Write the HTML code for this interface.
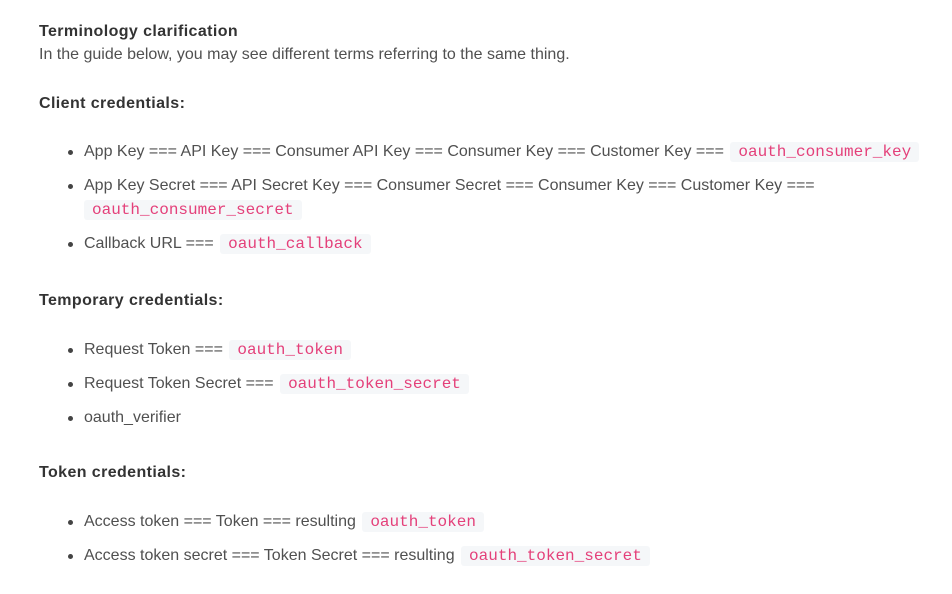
<!DOCTYPE html>
<html><head><meta charset="utf-8"><style>
html,body{margin:0;padding:0;background:#fff;width:952px;height:594px;overflow:hidden}
body{font-family:"Liberation Sans",Arial,sans-serif;font-size:16px;color:#505050;position:relative}
.l{position:absolute;left:39px;line-height:20px;white-space:nowrap}
.h{font-weight:bold;color:#333;letter-spacing:0.4px}
.b{left:84px}
.b.d::before{content:"";position:absolute;left:-16px;top:8px;width:5px;height:5px;border-radius:50%;background:#444}
code{font-family:"Liberation Mono",monospace;font-size:16px;color:#e4407a;background:#f5f7f9;border-radius:3px;padding:1px 8px;margin-left:2px;letter-spacing:0}
</style></head><body>
<div class="l h" style="top:22px">Terminology clarification</div>
<div class="l" style="top:45px">In the guide below, you may see different terms referring to the same thing.</div>
<div class="l h" style="top:94px">Client credentials:</div>
<div class="l b d" style="top:142px">App Key === API Key === Consumer API Key === Consumer Key === Customer Key === <code>oauth_consumer_key</code></div>
<div class="l b d" style="top:176px">App Key Secret === API Secret Key === Consumer Secret === Consumer Key === Customer Key ===</div>
<div class="l b" style="top:200px"><code style="margin-left:0">oauth_consumer_secret</code></div>
<div class="l b d" style="top:234px">Callback URL === <code>oauth_callback</code></div>
<div class="l h" style="top:291px">Temporary credentials:</div>
<div class="l b d" style="top:340px">Request Token === <code>oauth_token</code></div>
<div class="l b d" style="top:374px">Request Token Secret === <code>oauth_token_secret</code></div>
<div class="l b d" style="top:408px">oauth_verifier</div>
<div class="l h" style="top:463px">Token credentials:</div>
<div class="l b d" style="top:512px">Access token === Token === resulting <code>oauth_token</code></div>
<div class="l b d" style="top:546px">Access token secret === Token Secret === resulting <code>oauth_token_secret</code></div>
</body></html>
